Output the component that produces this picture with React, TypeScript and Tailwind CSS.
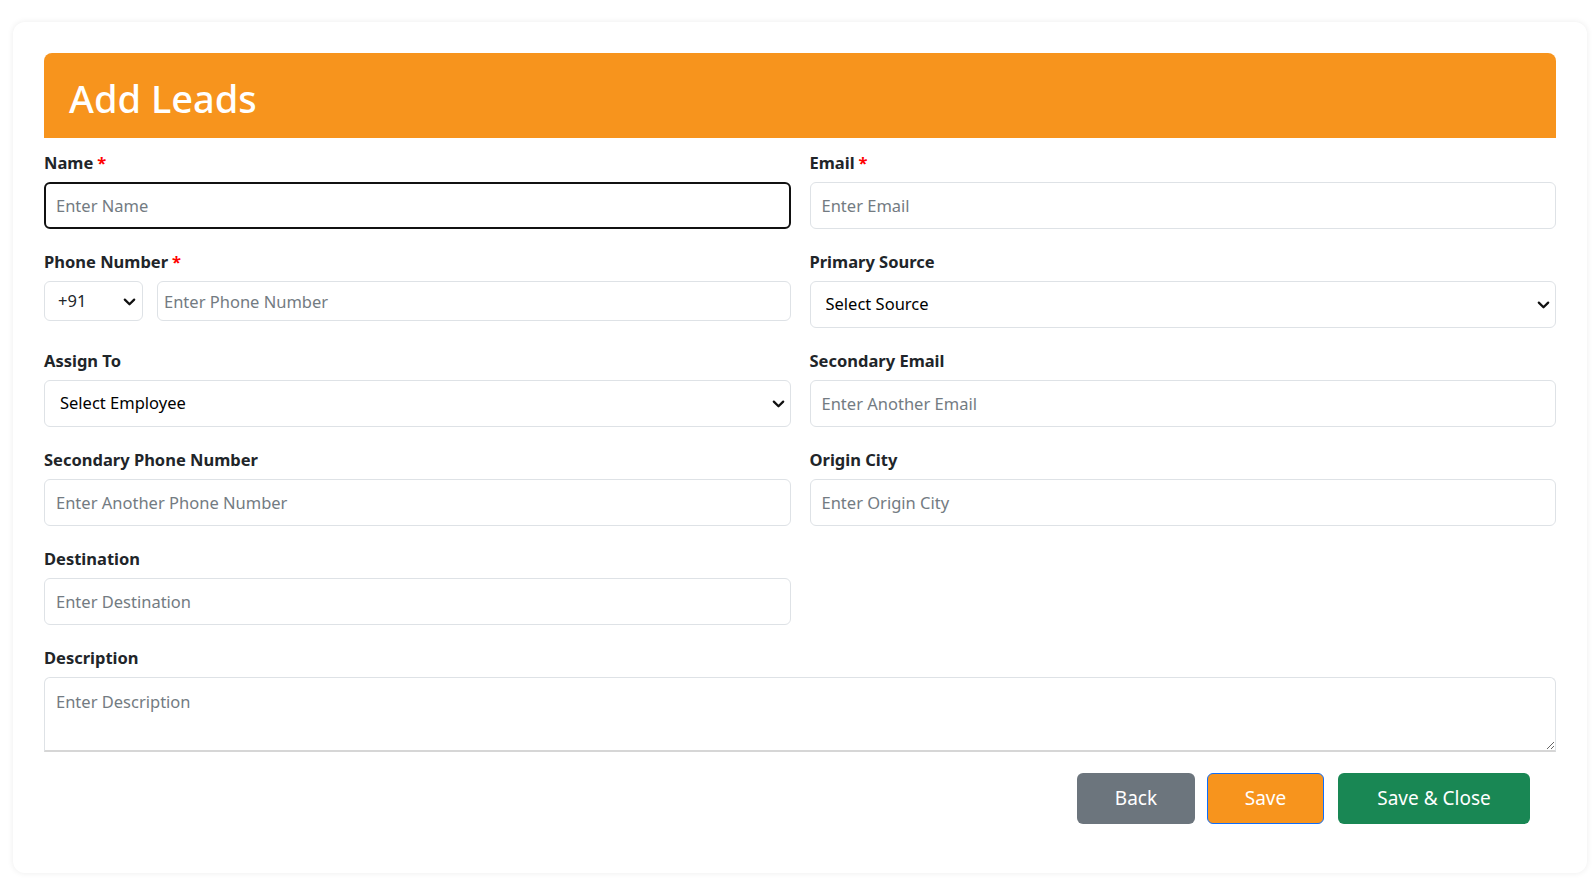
import { useState } from "react";

function Chevron({ className }: { className: string }) {
  return (
    <svg
      viewBox="0 0 16 16"
      className={className}
      fill="none"
      stroke="#111"
      strokeWidth="2.4"
      strokeLinecap="round"
      strokeLinejoin="round"
    >
      <path d="M3 6l5 5 5-5" />
    </svg>
  );
}

function Label({ text, required }: { text: string; required?: boolean }) {
  return (
    <label className="block h-6 leading-6 mb-[7px] text-[16.5px] font-bold text-[#212529]">
      {text}
      {required && <span className="text-[#ff0000] ml-1">*</span>}
    </label>
  );
}

const inputCls =
  "w-full h-[47px] rounded-md border border-[#dee2e6] bg-white px-[11px] text-[16.5px] text-[#212529] placeholder:text-[#737b82] outline-none";

export default function App() {
  const [form, setForm] = useState({
    name: "",
    email: "",
    phone: "",
    code: "+91",
    source: "",
    employee: "",
    email2: "",
    phone2: "",
    city: "",
    destination: "",
    description: "",
  });

  const set = (k: keyof typeof form) => (e: { target: { value: string } }) =>
    setForm({ ...form, [k]: e.target.value });

  return (
    <div className="min-h-screen bg-white font-['Noto_Sans',sans-serif] pt-[22px] pl-[13px] pr-[7px]">
      <div className="h-[851px] rounded-xl bg-white shadow-[0_0_6px_rgba(0,0,0,0.08)] pt-[31px] px-[31px]">
        <div className="h-[85px] rounded-t-lg bg-[#f7941d] flex items-center pl-[25px] pt-1">
          <h1 className="text-[38px] font-medium text-white leading-none">Add Leads</h1>
        </div>

        <form
          onSubmit={(e) => e.preventDefault()}
          className="mt-[13px] grid grid-cols-2 gap-x-[19px] gap-y-[21px]"
        >
          {/* Name */}
          <div>
            <Label text="Name" required />
            <input
              autoFocus
              value={form.name}
              onChange={set("name")}
              placeholder="Enter Name"
              className="w-full h-[47px] rounded-md border-2 border-[#111] bg-white px-[10px] text-[16.5px] text-[#212529] placeholder:text-[#737b82] outline-none"
            />
          </div>

          {/* Email */}
          <div>
            <Label text="Email" required />
            <input value={form.email} onChange={set("email")} placeholder="Enter Email" className={inputCls} />
          </div>

          {/* Phone */}
          <div>
            <Label text="Phone Number" required />
            <div className="flex gap-[14px]">
              <div className="relative w-[99px] shrink-0">
                <select
                  value={form.code}
                  onChange={set("code")}
                  className="w-full h-[40px] appearance-none rounded-md border border-[#dee2e6] bg-white pl-[13px] text-[16.5px] text-[#212529] outline-none"
                >
                  <option>+91</option>
                  <option>+1</option>
                  <option>+44</option>
                </select>
                <Chevron className="pointer-events-none absolute right-[6px] top-[13px] w-[15px] h-[15px]" />
              </div>
              <input
                value={form.phone}
                onChange={set("phone")}
                placeholder="Enter Phone Number"
                className="flex-1 h-[40px] rounded-md border border-[#dee2e6] bg-white px-[6px] text-[16.5px] placeholder:text-[#737b82] outline-none"
              />
            </div>
          </div>

          {/* Primary Source */}
          <div>
            <Label text="Primary Source" />
            <div className="relative">
              <select value={form.source} onChange={set("source")} className={inputCls + " appearance-none pl-[15px] text-black"}>
                <option value="">Select Source</option>
                <option>Website</option>
                <option>Referral</option>
              </select>
              <Chevron className="pointer-events-none absolute right-[5px] top-[16px] w-[15px] h-[15px]" />
            </div>
          </div>

          {/* Assign To */}
          <div>
            <Label text="Assign To" />
            <div className="relative">
              <select value={form.employee} onChange={set("employee")} className={inputCls + " appearance-none pl-[15px] text-black"}>
                <option value="">Select Employee</option>
              </select>
              <Chevron className="pointer-events-none absolute right-[5px] top-[16px] w-[15px] h-[15px]" />
            </div>
          </div>

          {/* Secondary Email */}
          <div>
            <Label text="Secondary Email" />
            <input value={form.email2} onChange={set("email2")} placeholder="Enter Another Email" className={inputCls} />
          </div>

          {/* Secondary Phone */}
          <div>
            <Label text="Secondary Phone Number" />
            <input value={form.phone2} onChange={set("phone2")} placeholder="Enter Another Phone Number" className={inputCls} />
          </div>

          {/* Origin City */}
          <div>
            <Label text="Origin City" />
            <input value={form.city} onChange={set("city")} placeholder="Enter Origin City" className={inputCls} />
          </div>

          {/* Destination */}
          <div>
            <Label text="Destination" />
            <input value={form.destination} onChange={set("destination")} placeholder="Enter Destination" className={inputCls} />
          </div>
          <div />

          {/* Description */}
          <div className="col-span-2">
            <Label text="Description" />
            <textarea
              value={form.description}
              onChange={set("description")}
              placeholder="Enter Description"
              className="block w-full h-[75px] rounded-t-md border border-b-2 border-[#dee2e6] border-b-[#d6d6d6] bg-white px-[11px] pt-[12px] text-[16.5px] leading-6 placeholder:text-[#737b82] outline-none"
            />
          </div>
        </form>

        <div className="mt-[21px] flex justify-end pr-[26px]">
          <button className="w-[118px] h-[51px] rounded-md bg-[#6c757d] text-white text-[19px]">Back</button>
          <button className="ml-3 w-[117px] h-[51px] rounded-md bg-[#f7941d] border border-[#0d6efd] text-white text-[19px]">
            Save
          </button>
          <button className="ml-[14px] w-[192px] h-[51px] rounded-md bg-[#198754] text-white text-[19px]">
            Save &amp; Close
          </button>
        </div>
      </div>
    </div>
  );
}
